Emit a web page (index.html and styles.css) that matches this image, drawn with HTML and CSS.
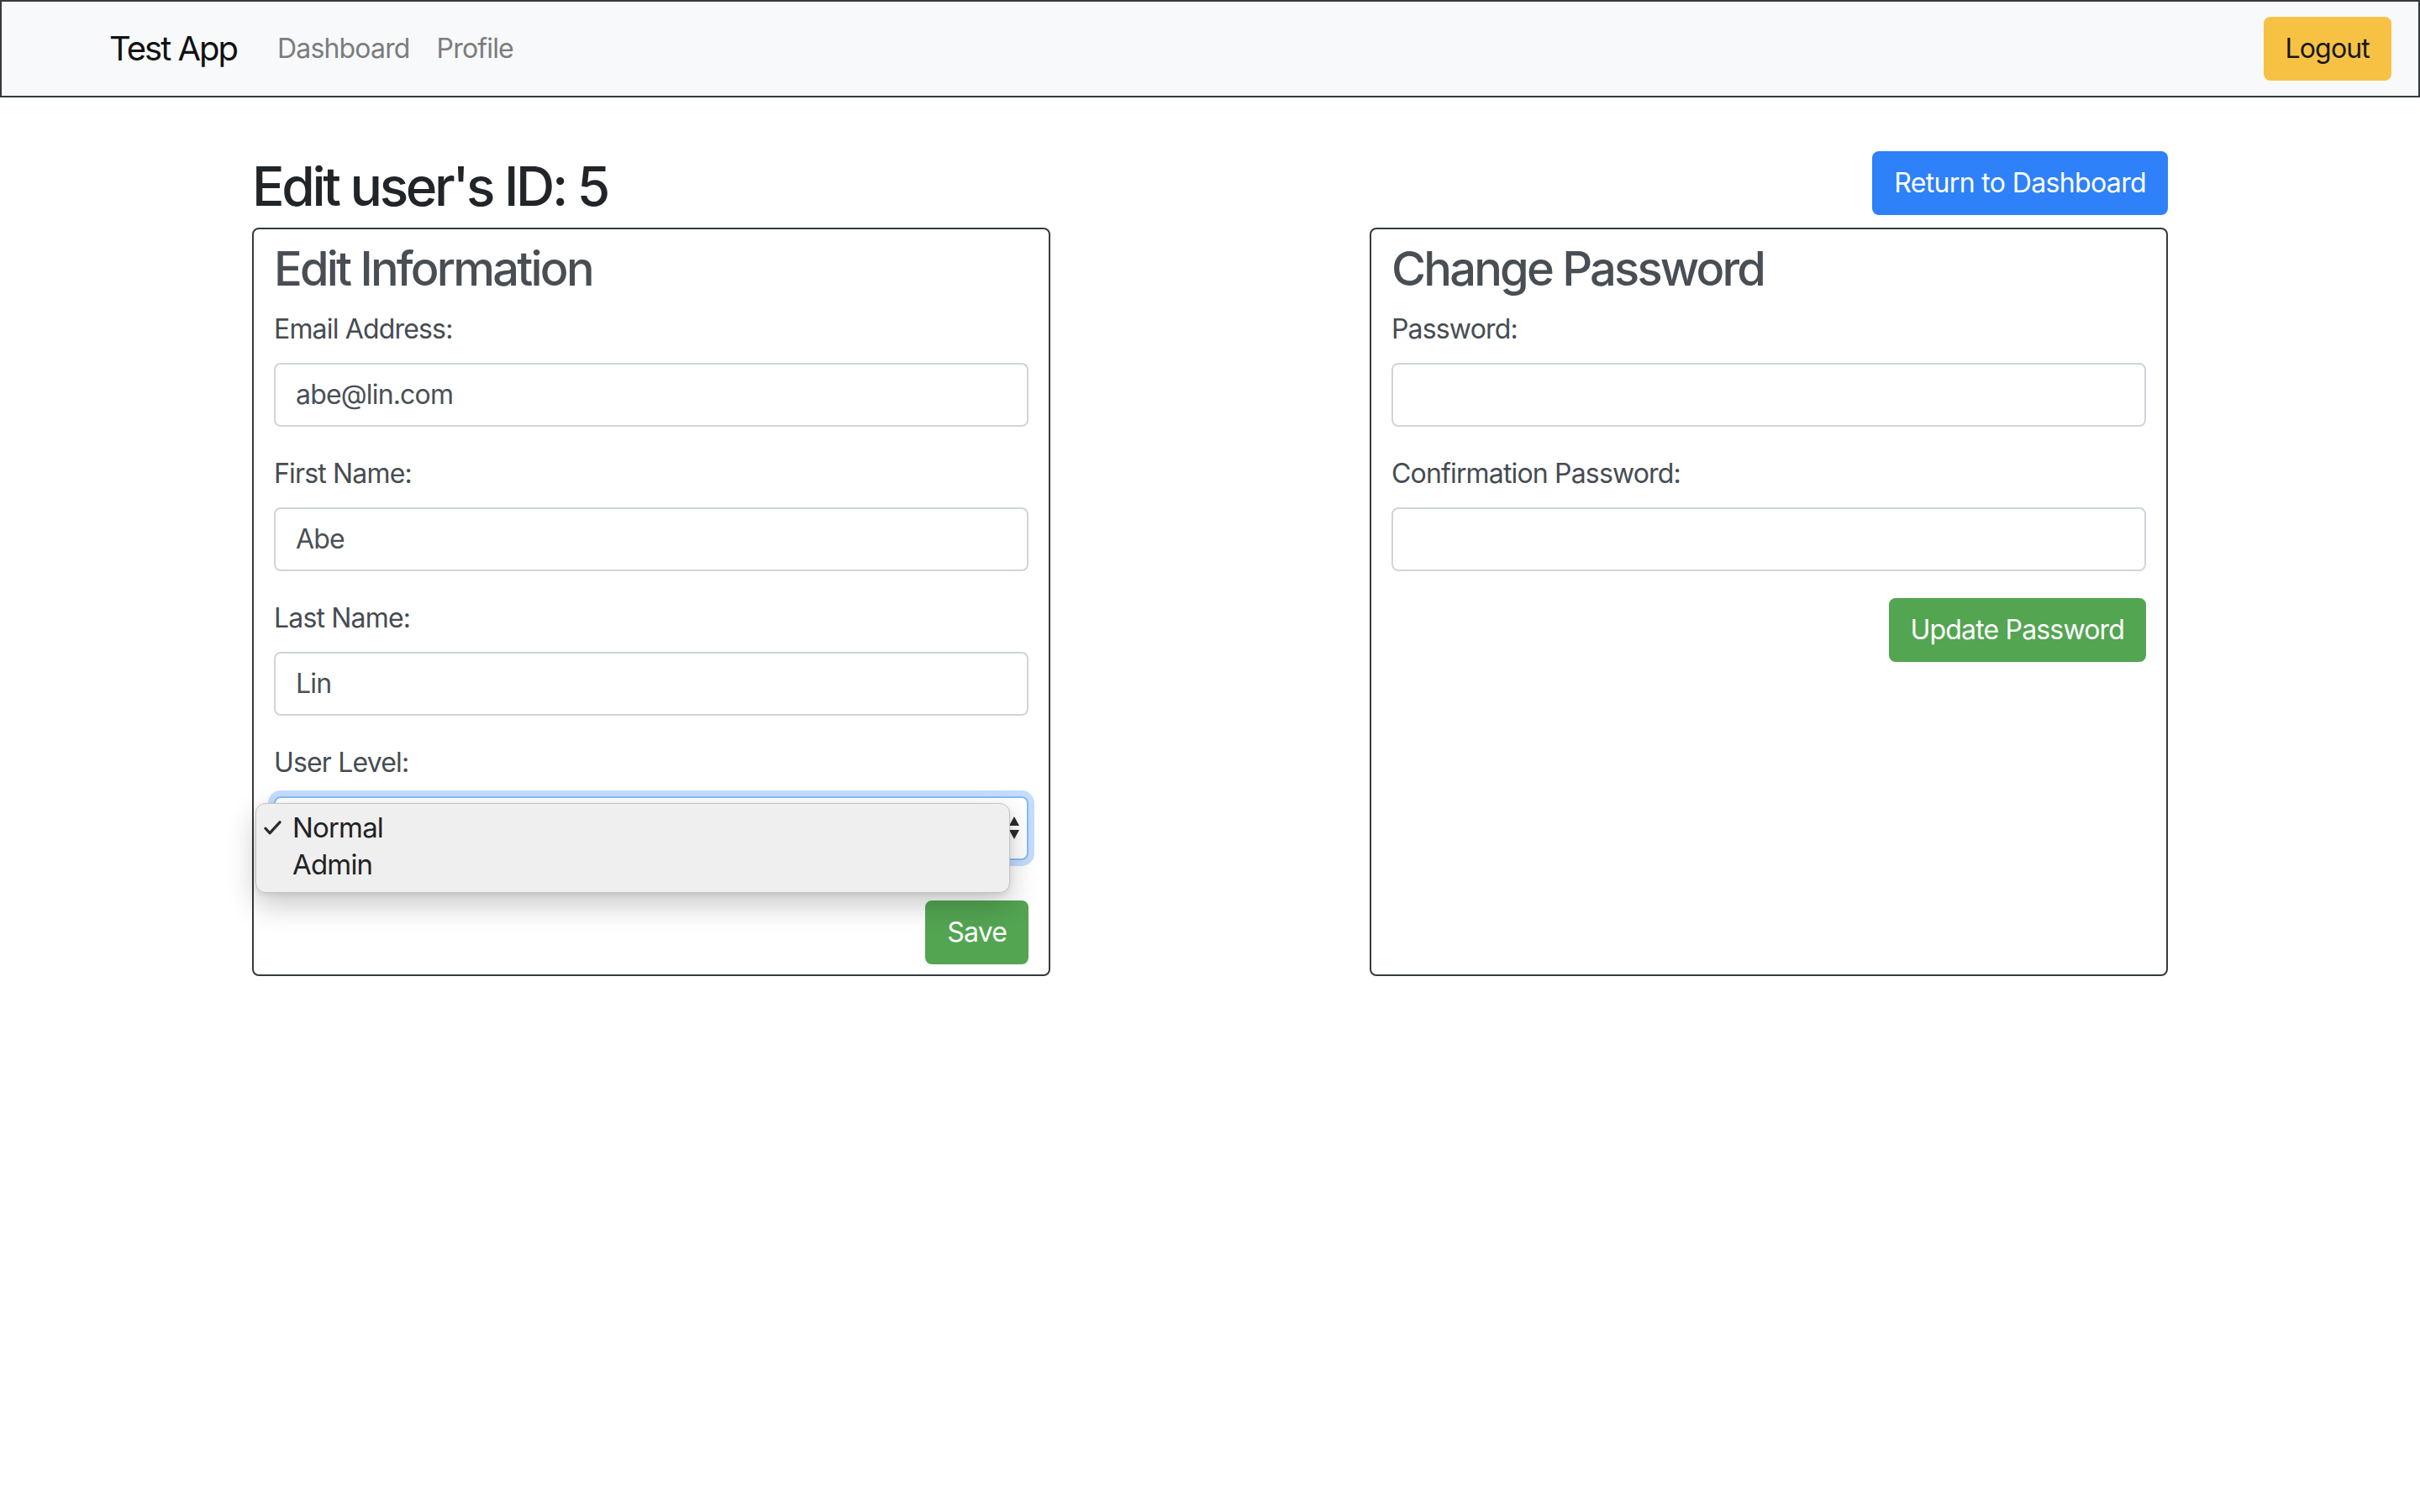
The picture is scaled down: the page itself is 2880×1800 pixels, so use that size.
FILE: index.html
```html
<!DOCTYPE html>
<html lang="en">
<head>
<meta charset="utf-8">
<title>Test App - Edit user</title>
<link rel="stylesheet" href="styles.css">
</head>
<body>
<nav class="navbar">
  <div class="nav-left">
    <a class="brand" href="#">Test App</a>
    <ul class="nav-links">
      <li><a class="nav-link" href="#">Dashboard</a></li>
      <li><a class="nav-link" href="#">Profile</a></li>
    </ul>
  </div>
  <a class="btn btn-warning" href="#">Logout</a>
</nav>

<main class="container">
  <div class="page-head">
    <h2 class="page-title">Edit user's ID: 5</h2>
    <a class="btn btn-primary" href="#">Return to Dashboard</a>
  </div>

  <div class="cards">
    <section class="card">
      <h3 class="card-title">Edit Information</h3>
      <div class="form-group">
        <label class="label">Email Address:</label>
        <div class="input">abe@lin.com</div>
      </div>
      <div class="form-group">
        <label class="label">First Name:</label>
        <div class="input">Abe</div>
      </div>
      <div class="form-group">
        <label class="label">Last Name:</label>
        <div class="input">Lin</div>
      </div>
      <div class="form-group form-group-select">
        <label class="label">User Level:</label>
        <div class="select-wrap">
          <div class="input select">
            <span>Normal</span>
            <svg class="select-arrows" width="14" height="30" viewBox="0 0 14 30"><path d="M7 1 L13 12 L1 12 Z" fill="#2b2b2b"/><path d="M1 17 L13 17 L7 28 Z" fill="#2b2b2b"/></svg>
          </div>
          <div class="menu">
            <div class="menu-item">
              <svg class="check" width="21" height="17" viewBox="0 0 21 17"><path d="M2 9.2 L7 14.8 L19 1.8" fill="none" stroke="#2a2a2a" stroke-width="3.2" stroke-linecap="round" stroke-linejoin="round"/></svg>
              <span>Normal</span>
            </div>
            <div class="menu-item"><span>Admin</span></div>
          </div>
        </div>
      </div>
      <div class="actions">
        <a class="btn btn-success" href="#">Save</a>
      </div>
    </section>

    <section class="card">
      <h3 class="card-title">Change Password</h3>
      <div class="form-group">
        <label class="label">Password:</label>
        <div class="input"></div>
      </div>
      <div class="form-group">
        <label class="label">Confirmation Password:</label>
        <div class="input"></div>
      </div>
      <div class="actions">
        <a class="btn btn-success" href="#">Update Password</a>
      </div>
    </section>
  </div>
</main>
</body>
</html>
```

FILE: styles.css
```css
* { box-sizing: border-box; }

html, body {
  margin: 0;
  padding: 0;
  background: #ffffff;
}

body {
  font-family: Inter, "Liberation Sans", sans-serif;
  font-size: 32px;
  line-height: 1.5;
  letter-spacing: -0.026em;
  color: #212529;
}

a { text-decoration: none; }

/* Navbar */
.navbar {
  display: flex;
  align-items: center;
  justify-content: space-between;
  height: 116px;
  padding: 0 32px;
  background: #f8f9fa;
  border: 2px solid #343a40;
}

.nav-left {
  display: flex;
  align-items: center;
}

.brand {
  margin-left: 96px;
  margin-right: 32px;
  font-size: 40px;
  line-height: 60px;
  letter-spacing: -0.05em;
  color: #111111;
}

.nav-links {
  display: flex;
  list-style: none;
  margin: 0;
  padding: 0;
}

.nav-link {
  display: block;
  padding: 16px;
  font-size: 32px;
  line-height: 48px;
  color: #7b7c7d;
}

/* Buttons */
.btn {
  display: inline-block;
  padding: 12px 24px;
  border: 2px solid transparent;
  border-radius: 8px;
  font-size: 32px;
  line-height: 48px;
  white-space: nowrap;
}

.btn-warning { background: #f7c244; border-color: #f7c244; color: #16181b; }
.btn-primary { background: #2e81f8; border-color: #2e81f8; color: #ffffff; letter-spacing: -0.02em; }
.btn-success { background: #53a552; border-color: #53a552; color: #ffffff; }

/* Page */
.container {
  width: 2280px;
  margin: 0 auto;
  padding-top: 64px;
}

.page-head {
  display: flex;
  align-items: flex-start;
  justify-content: space-between;
  margin-bottom: 10px;
}

.page-title {
  margin: 0;
  padding-top: 4px;
  font-size: 64px;
  line-height: 1.2;
  font-weight: 500;
  letter-spacing: -0.052em;
  color: #212529;
}

.cards {
  display: flex;
  justify-content: space-between;
  align-items: stretch;
}

.card {
  width: 950px;
  padding: 14px 24px 12px;
  border: 2px solid #343a40;
  border-radius: 8px;
  color: #464c52;
}

.card-title {
  margin: 0 0 14px;
  font-size: 56px;
  line-height: 1.2;
  font-weight: 500;
  letter-spacing: -0.05em;
  color: #484e54;
}

.form-group {
  margin-bottom: 32px;
}

.form-group-select {
  margin-bottom: 48px;
}

.label {
  display: block;
  margin-bottom: 16px;
  font-size: 32px;
  line-height: 48px;
}

.input {
  width: 100%;
  height: 76px;
  padding: 12px 24px;
  border: 2px solid #d0d5da;
  border-radius: 8px;
  font-size: 32px;
  line-height: 48px;
  color: #495057;
  background: #ffffff;
}

/* Select with open native menu */
.select-wrap {
  position: relative;
}

.select {
  display: flex;
  align-items: center;
  justify-content: space-between;
  padding-right: 8px;
  border-color: #84bcfb;
  box-shadow: 0 0 0 7px #c6dcfc;
}

.select-arrows {
  display: block;
}

.menu {
  position: absolute;
  left: -22px;
  top: 8px;
  width: 898px;
  padding: 6px 0 11px;
  background: #efefef;
  border: 1px solid #c4c4c4;
  border-radius: 12px;
  box-shadow: 0 14px 34px rgba(0, 0, 0, 0.22), 0 2px 6px rgba(0, 0, 0, 0.08);
}

.menu-item {
  display: flex;
  align-items: center;
  height: 44px;
  padding-left: 43px;
  position: relative;
  font-size: 33px;
  line-height: 44px;
  color: #222222;
}

.check {
  position: absolute;
  left: 9px;
  top: 14px;
}

.actions {
  display: flex;
  justify-content: flex-end;
}
```
